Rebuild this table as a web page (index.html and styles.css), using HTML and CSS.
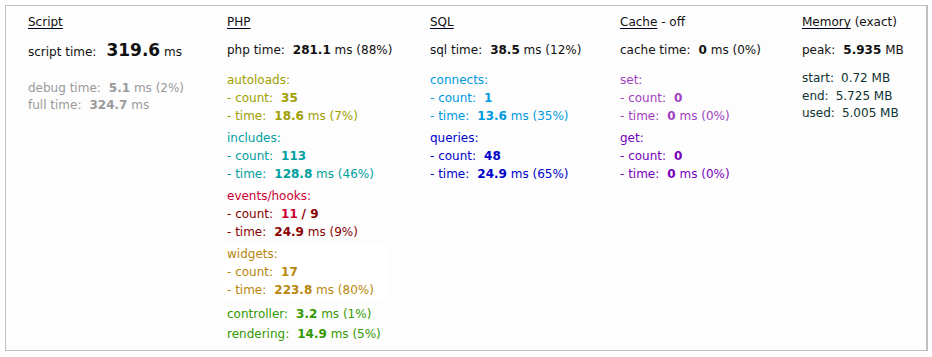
FILE: index.html
```html
<!DOCTYPE html>
<html>
<head>
<meta charset="utf-8">
<link rel="stylesheet" href="styles.css">
</head>
<body>
<div class="panel">
  <div class="col c1">
    <div class="head"><u>Script</u></div>
    <div class="main">script time:<b class="big">319.6</b> ms</div>
    <div class="grp gray">
      <div>debug time:<b>5.1</b> ms (2%)</div>
      <div>full time:<b>324.7</b> ms</div>
    </div>
  </div>
  <div class="col c2">
    <div class="head"><u>PHP</u></div>
    <div class="main">php time:<b>281.1</b> ms (88%)</div>
    <div class="grp olive">
      <div>autoloads:</div>
      <div>- count:<b>35</b></div>
      <div>- time:<b>18.6</b> ms (7%)</div>
    </div>
    <div class="grp teal">
      <div>includes:</div>
      <div>- count:<b>113</b></div>
      <div>- time:<b>128.8</b> ms (46%)</div>
    </div>
    <div class="grp maroon">
      <div class="crimson">events/hooks:</div>
      <div>- count:<b class="crimson">11</b> <b class="slash">/ 9</b></div>
      <div>- time:<b>24.9</b> ms (9%)</div>
    </div>
    <div class="grp gold">
      <div>widgets:</div>
      <div>- count:<b>17</b></div>
      <div>- time:<b>223.8</b> ms (80%)</div>
    </div>
    <div class="grp green">
      <div class="sep">controller:<b>3.2</b> ms (1%)</div>
      <div class="sep">rendering:<b>14.9</b> ms (5%)</div>
    </div>
  </div>
  <div class="col c3">
    <div class="head"><u>SQL</u></div>
    <div class="main">sql time:<b>38.5</b> ms (12%)</div>
    <div class="grp sky">
      <div>connects:</div>
      <div>- count:<b>1</b></div>
      <div>- time:<b>13.6</b> ms (35%)</div>
    </div>
    <div class="grp blue">
      <div>queries:</div>
      <div>- count:<b>48</b></div>
      <div>- time:<b>24.9</b> ms (65%)</div>
    </div>
  </div>
  <div class="col c4">
    <div class="head"><u>Cache</u> - off</div>
    <div class="main">cache time:<b>0</b> ms (0%)</div>
    <div class="grp orchid">
      <div>set:</div>
      <div>- count:<b>0</b></div>
      <div>- time:<b>0</b> ms (0%)</div>
    </div>
    <div class="grp violet">
      <div>get:</div>
      <div>- count:<b>0</b></div>
      <div>- time:<b>0</b> ms (0%)</div>
    </div>
  </div>
  <div class="col c5">
    <div class="head"><u>Memory</u> (exact)</div>
    <div class="main">peak:<b>5.935</b> MB</div>
    <div class="grp mem">
      <div>start:<span class="v">0.72 MB</span></div>
      <div>end:<span class="v">5.725 MB</span></div>
      <div>used:<span class="v">5.005 MB</span></div>
    </div>
  </div>
</div>
</body>
</html>
```
FILE: styles.css
```css
html, body {
  margin: 0;
  padding: 0;
  background: #ffffff;
}
body {
  padding: 5px;
  font-family: "DejaVu Sans", Verdana, sans-serif;
  font-size: 12px;
  color: #111111;
}
.panel {
  display: flex;
  height: 346px;
  box-sizing: border-box;
  border: 1px solid #c0c0c0;
  border-right-width: 2px;
  background: #fdfdfd;
  width: 923px;
  padding: 7px 0 0 22px;
}
.col { display: flex; flex-direction: column; }
.c1 { width: 199px; }
.c2 { width: 203px; }
.c3 { width: 190px; }
.c4 { width: 182px; }
.c5 { flex: 1; }
.head {
  line-height: 18px;
  height: 18px;
  color: #111;
}
.head u {
  text-decoration-color: #000022;
  text-underline-offset: 2px;
}
.main {
  margin-top: 10px;
  line-height: 18px;
  color: #111;
}
b { font-weight: bold; margin-left: 8px; }
b.big { font-size: 17px; margin-left: 10px; }
.grp {
  margin-top: 12px;
  line-height: 18px;
}
.grp + .grp { margin-top: 4px; }
.gray { color: #9a9a9a; line-height: 17px; margin-top: 19px; }
.olive { color: #a0a000; }
.teal { color: #00a0a0; }
.maroon { color: #880000; }
.crimson { color: #cc0033; }
b.slash { margin-left: 0; color: #880000; }
.gold {
  color: #b8860b;
  background: #ffffff;
  width: 163px;
  margin-left: -2px;
  padding-left: 2px;
}
.green { color: #339900; }
.green .sep { line-height: 20px; }
.grp.green { margin-top: 5px; }
.sky { color: #0099dd; }
.blue { color: #0000cc; }
.orchid { color: #a040c0; }
.violet { color: #7700bb; }
.mem { color: #103333; line-height: 17.5px; margin-top: 11px; }
.mem .v { margin-left: 7px; }
```
